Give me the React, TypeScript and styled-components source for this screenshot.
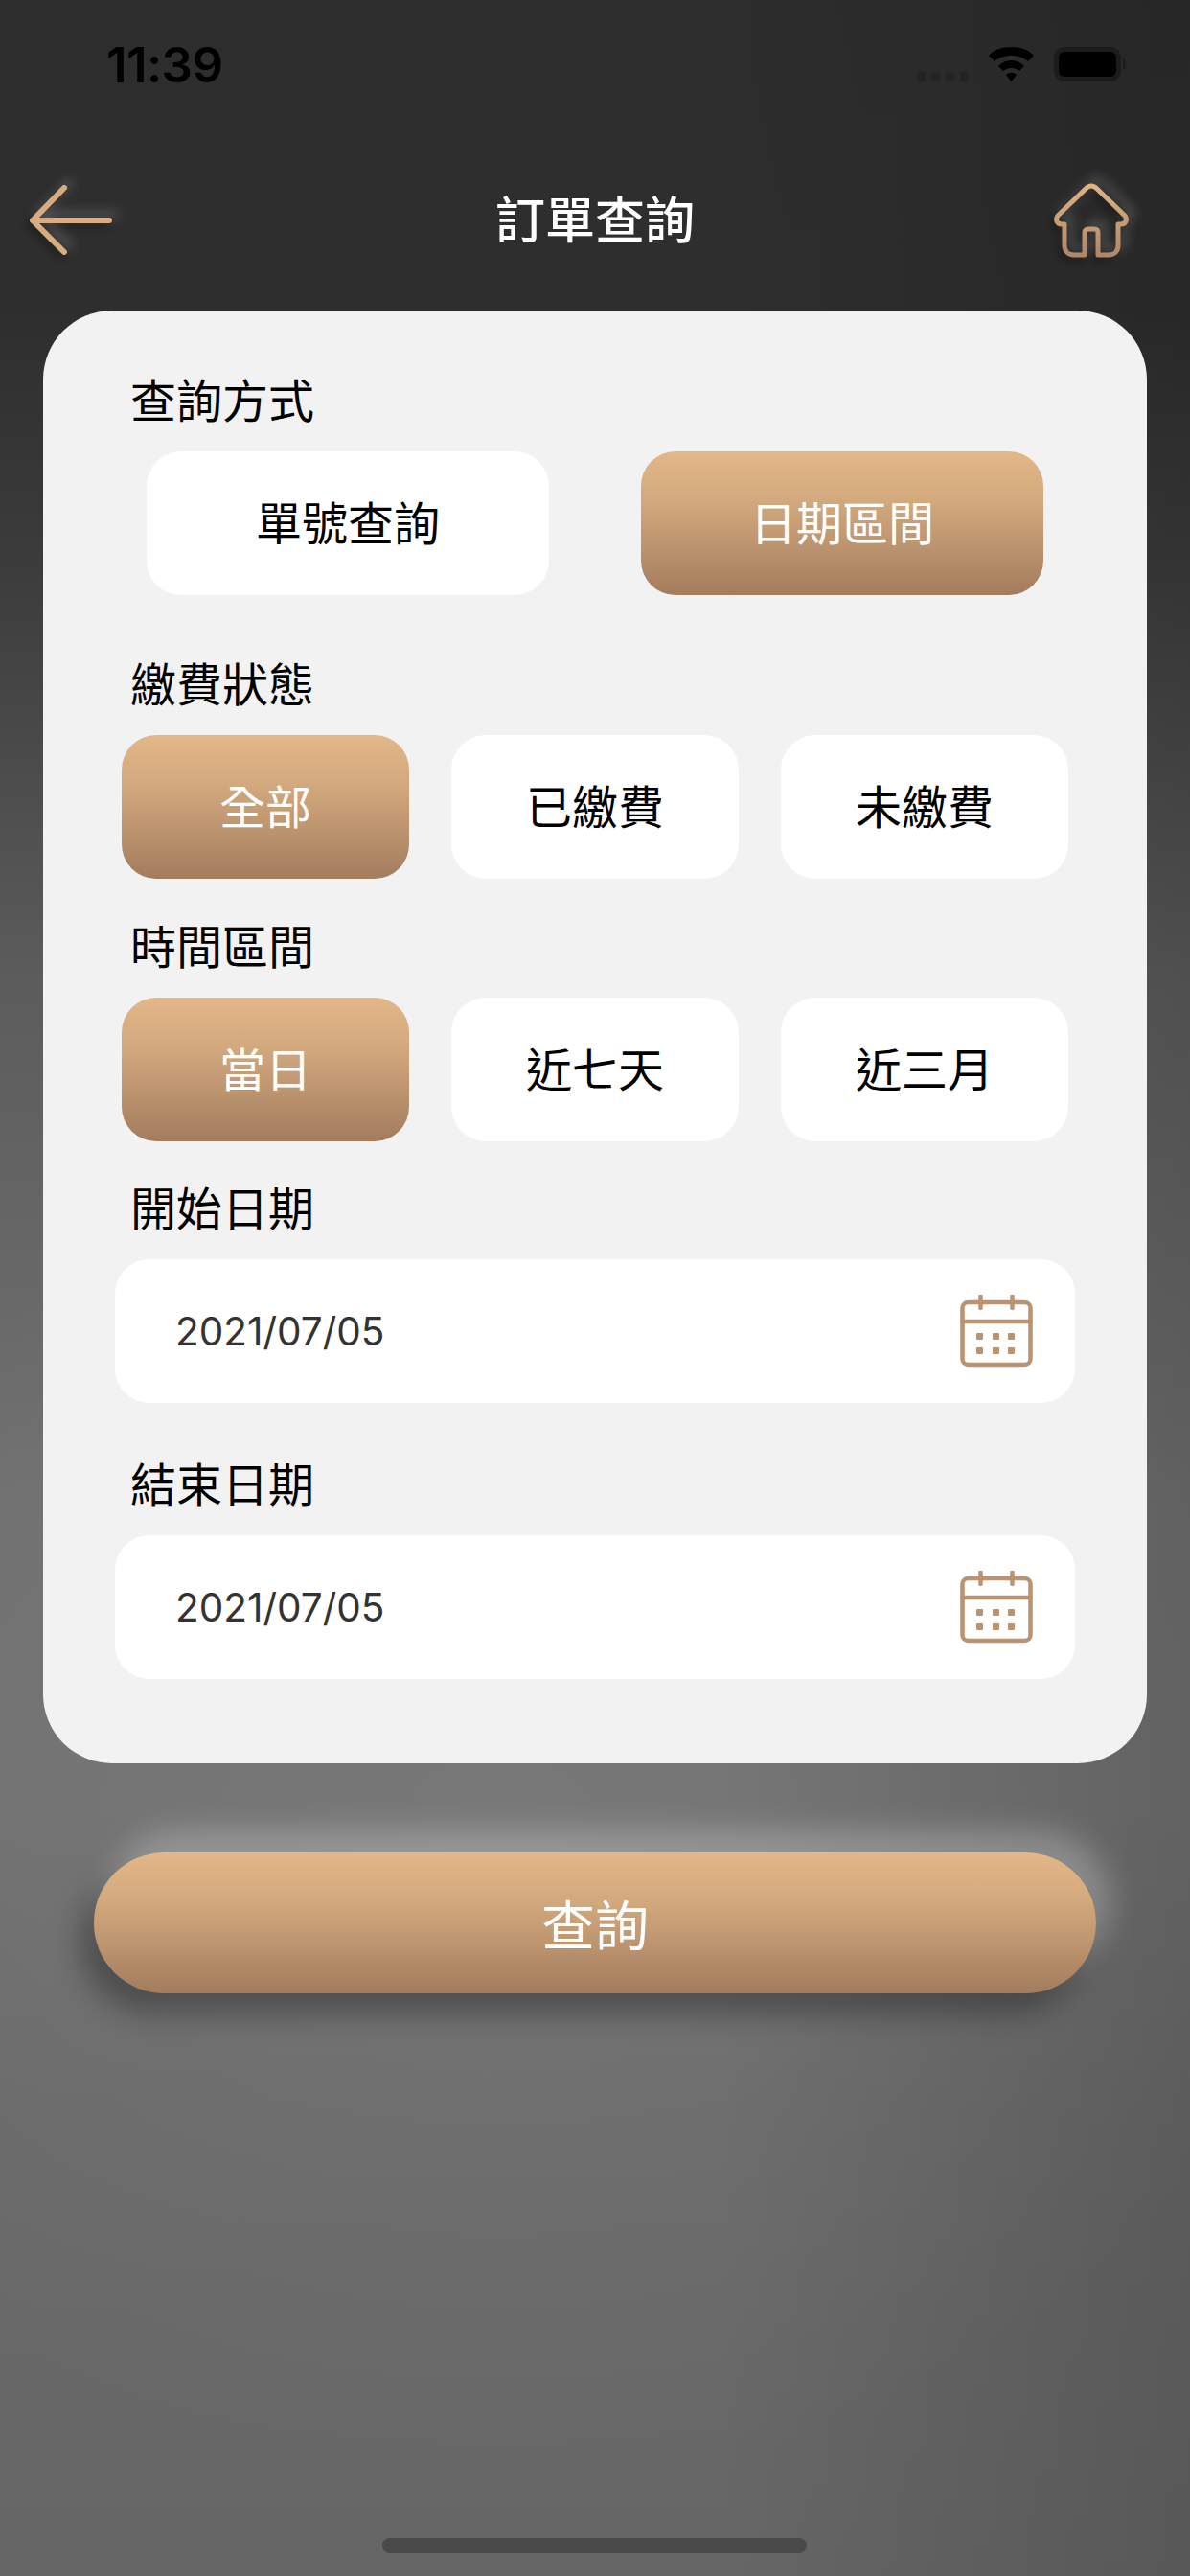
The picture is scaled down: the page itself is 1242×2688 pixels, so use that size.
import React from "react";
import styled, { createGlobalStyle } from "styled-components";

const GlobalStyle = createGlobalStyle`
  html, body {
    margin: 0;
    padding: 0;
    background: #2c2c2c;
  }
  * {
    box-sizing: border-box;
  }
`;

const fontStack = `"Noto Sans CJK TC", "Noto Sans", sans-serif`;
const goldGradient = "linear-gradient(180deg, #e2b789 0%, #d2a97d 35%, #a37c5e 100%)";

const Screen = styled.div`
  position: relative;
  width: 1242px;
  height: 2688px;
  overflow: hidden;
  font-family: ${fontStack};
  background: radial-gradient(
      ellipse 900px 700px at 42% 71%,
      rgba(255, 255, 255, 0.06) 0%,
      rgba(255, 255, 255, 0) 100%
    ),
    linear-gradient(
      90deg,
      rgba(0, 0, 0, 0) 60%,
      rgba(0, 0, 0, 0.14) 100%
    ),
    linear-gradient(
      180deg,
      #2d2d2d 0%,
      #2e2e2e 12%,
      #3c3c3c 22%,
      #5c5c5c 38%,
      #707070 58%,
      #707070 70%,
      #6a6a6a 82%,
      #666666 100%
    );
`;

const StatusBar = styled.div`
  height: 136px;
  padding: 28px 63px 0 111px;
  display: flex;
  align-items: flex-start;
  justify-content: space-between;
`;

const Clock = styled.div`
  font-family: "Inter", "Liberation Sans", sans-serif;
  font-size: 51px;
  line-height: 80px;
  font-weight: 600;
  letter-spacing: -0.6px;
  color: #000;
`;

const StatusIcons = styled.div`
  display: flex;
  align-items: center;
  height: 80px;
`;

const NavBar = styled.div`
  height: 188px;
  padding: 0 62px;
  display: grid;
  grid-template-columns: 1fr auto 1fr;
  align-items: center;
`;

const NavTitle = styled.div`
  font-size: 52px;
  font-weight: 500;
  color: #fff;
  line-height: 70px;
  margin-top: -6px;
`;

const NavIcon = styled.svg<{ $end?: boolean }>`
  display: block;
  justify-self: ${(p) => (p.$end ? "end" : "start")};
  margin-left: ${(p) => (p.$end ? 0 : -33)}px;
  filter: drop-shadow(6px -6px 6px rgba(255, 255, 255, 0.26))
    drop-shadow(-3px 4px 4px rgba(0, 0, 0, 0.4));
`;

const Card = styled.div`
  width: 1152px;
  height: 1516px;
  margin: 0 0 0 45px;
  padding: 62px 75px 0;
  border-radius: 72px;
  background: #f2f2f2;
  display: flex;
  flex-direction: column;
`;

const Label = styled.div`
  font-size: 48px;
  line-height: 64px;
  margin: -3px 0 24px 16px;
  color: #000;
`;

const Row = styled.div<{ $gap: number; $inset: number; $after: number }>`
  display: flex;
  gap: ${(p) => p.$gap}px;
  padding-left: ${(p) => p.$inset}px;
  margin-bottom: ${(p) => p.$after}px;
`;

const OptionButton = styled.div<{ $active?: boolean; $wide?: boolean }>`
  width: ${(p) => (p.$wide ? 420 : 300)}px;
  height: 150px;
  padding-bottom: 6px;
  border-radius: 36px;
  display: flex;
  align-items: center;
  justify-content: center;
  font-size: 48px;
  color: ${(p) => (p.$active ? "#fff" : "#000")};
  background: ${(p) => (p.$active ? goldGradient : "#fff")};
`;

const DateField = styled.div<{ $after: number }>`
  width: 1002px;
  height: 150px;
  margin-bottom: ${(p) => p.$after}px;
  padding: 0 44px 0 63px;
  border-radius: 36px;
  background: #fff;
  display: flex;
  align-items: center;
  justify-content: space-between;
  font-family: "Inter", "Liberation Sans", sans-serif;
  font-size: 40.5px;
  color: #333;
`;

const SubmitButton = styled.div`
  width: 1046px;
  height: 147px;
  margin: 93px 0 0 98px;
  padding-bottom: 2px;
  border-radius: 74px;
  display: flex;
  align-items: center;
  justify-content: center;
  font-size: 56px;
  color: #fff;
  background: ${goldGradient};
  box-shadow: 14px -22px 32px rgba(255, 255, 255, 0.26),
    -14px 20px 32px rgba(0, 0, 0, 0.32);
`;

const HomeIndicator = styled.div`
  position: absolute;
  left: 399px;
  bottom: 24px;
  width: 443px;
  height: 16px;
  border-radius: 8px;
  background: #4a4a4a;
`;

const CalendarIcon = () => (
  <svg width="76" height="76" viewBox="0 0 76 76" fill="none" stroke="#bb9370" strokeWidth="4.5" strokeLinecap="round">
    <rect x="2.5" y="8" width="71" height="65" rx="6" />
    <path d="M2.5 28H73.5M21.5 1.5V14M54.5 1.5V14" />
    <g fill="#bb9370" stroke="none">
      <rect x="17" y="40" width="7" height="7" rx="1" />
      <rect x="34" y="40" width="7" height="7" rx="1" />
      <rect x="50" y="40" width="7" height="7" rx="1" />
      <rect x="17" y="55" width="7" height="7" rx="1" />
      <rect x="34" y="55" width="7" height="7" rx="1" />
      <rect x="50" y="55" width="7" height="7" rx="1" />
    </g>
  </svg>
);

export default function App() {
  return (
    <Screen>
      <GlobalStyle />
      <StatusBar>
        <Clock>11:39</Clock>
        <StatusIcons>
          <svg width="222" height="44" viewBox="0 0 222 44">
            <g fill="#232323">
              <rect x="0" y="29" width="9" height="10" rx="3" />
              <rect x="15" y="29" width="9" height="10" rx="3" />
              <rect x="30" y="29" width="9" height="10" rx="3" />
              <rect x="45" y="29" width="9" height="10" rx="3" />
            </g>
            <path
              d="M75 12C84 0 113 0 122 12L116 18C107 10 90 10 81 18ZM85 23C92 15 105 15 112 23L107 28C102 24 95 24 90 28ZM98.5 39L93 32C96 29 101 29 104 32Z"
              fill="#000"
            />
            <rect x="145.5" y="5.5" width="65" height="31" rx="9" fill="none" stroke="#1c1c1c" strokeWidth="5" />
            <rect x="148" y="8" width="60" height="26" rx="6" fill="#000" />
            <path d="M215 15C219 17 219 25 215 27Z" fill="#1c1c1c" />
          </svg>
        </StatusIcons>
      </StatusBar>
      <NavBar>
        <NavIcon width="90" height="74" viewBox="0 0 90 74" fill="none" stroke="#d9ab80" strokeWidth="6" strokeLinecap="round" strokeLinejoin="round">
          <path d="M38 3L5 37L38 70M5 37H85" />
        </NavIcon>
        <NavTitle>訂單查詢</NavTitle>
        <NavIcon $end width="80" height="78" viewBox="0 0 80 78" fill="none" stroke="url(#homeStroke)" strokeWidth="5" strokeLinecap="round" strokeLinejoin="round">
          <defs>
            <linearGradient id="homeStroke" x1="0" y1="0" x2="0" y2="1">
              <stop offset="0" stopColor="#e0b284" />
              <stop offset="1" stopColor="#b08868" />
            </linearGradient>
          </defs>
          <path d="M39 3C36 3 35 4 33 6L4 34C1 38 3 43 8 43H11V65C11 71 15 75 21 75H32V52C32 49 33 48 36 48H42C45 48 46 49 46 52V75H57C63 75 67 71 67 65V43H70C75 43 77 38 74 34L45 6C43 4 42 3 39 3Z" />
        </NavIcon>
      </NavBar>
      <Card>
        <Label>查詢方式</Label>
        <Row $gap={96} $inset={33} $after={61}>
          <OptionButton $wide>單號查詢</OptionButton>
          <OptionButton $wide $active>日期區間</OptionButton>
        </Row>
        <Label>繳費狀態</Label>
        <Row $gap={44} $inset={7} $after={39}>
          <OptionButton $active>全部</OptionButton>
          <OptionButton>已繳費</OptionButton>
          <OptionButton>未繳費</OptionButton>
        </Row>
        <Label>時間區間</Label>
        <Row $gap={44} $inset={7} $after={38}>
          <OptionButton $active>當日</OptionButton>
          <OptionButton>近七天</OptionButton>
          <OptionButton>近三月</OptionButton>
        </Row>
        <Label>開始日期</Label>
        <DateField $after={53}>
          2021/07/05
          <CalendarIcon />
        </DateField>
        <Label>結束日期</Label>
        <DateField $after={0}>
          2021/07/05
          <CalendarIcon />
        </DateField>
      </Card>
      <SubmitButton>查詢</SubmitButton>
      <HomeIndicator />
    </Screen>
  );
}
